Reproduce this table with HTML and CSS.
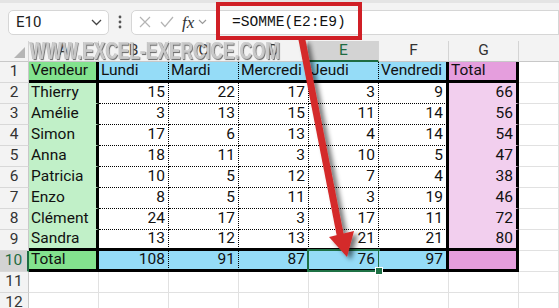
FILE: index.html
```html
<!DOCTYPE html>
<html lang="fr">
<head>
<meta charset="utf-8">
<link rel="stylesheet" href="styles.css">
</head>
<body>
<div class="app">
  <div class="toolbar">
    <div class="namebox">
      <span>E10</span>
      <svg class="chev" width="11" height="7" viewBox="0 0 11 7"><path d="M1 1 L5.5 5.5 L10 1" fill="none" stroke="#444" stroke-width="1.3"/></svg>
    </div>
    <svg class="dots" width="4" height="14" viewBox="0 0 4 14"><circle cx="2" cy="2" r="1.4" fill="#555"/><circle cx="2" cy="7" r="1.4" fill="#555"/><circle cx="2" cy="12" r="1.4" fill="#555"/></svg>
    <div class="fxbox">
      <svg width="12" height="12" viewBox="0 0 12 12"><path d="M1 1 L11 11 M11 1 L1 11" stroke="#b4b4b4" stroke-width="1.2" fill="none"/></svg>
      <svg width="14" height="12" viewBox="0 0 14 12"><path d="M1 6 L5 10.5 L13 1" stroke="#b4b4b4" stroke-width="1.2" fill="none"/></svg>
      <span class="fx">fx</span>
      <svg width="9" height="6" viewBox="0 0 9 6"><path d="M1 1 L4.5 4.5 L8 1" fill="none" stroke="#9a9a9a" stroke-width="1.2"/></svg>
    </div>
    <div class="formula">=SOMME(E2:E9)</div>
    <div class="redbox"></div>
  </div>

  <div class="sheet">
    <div class="corner"></div>
    <div class="ch">A</div><div class="ch">B</div><div class="ch">C</div><div class="ch">D</div><div class="ch sel">E</div><div class="ch">F</div><div class="ch">G</div><div class="ch last"></div>

    <div class="rh">1</div>
    <div class="c a dk r1">Vendeur</div>
    <div class="c bl r1 dot">Lundi</div>
    <div class="c bl r1 dot">Mardi</div>
    <div class="c bl r1 dot">Mercredi</div>
    <div class="c bl r1 dot">Jeudi</div>
    <div class="c bl r1 thr">Vendredi</div>
    <div class="c g gk r1">Total</div>
    <div class="c e"></div>

    <div class="rh">2</div>
    <div class="c a">Thierry</div>
    <div class="c n dot dr">15</div><div class="c n dot dr">22</div><div class="c n dot dr">17</div><div class="c n dot dr">3</div><div class="c n thr dr">9</div>
    <div class="c n g">66</div><div class="c e"></div>

    <div class="rh">3</div>
    <div class="c a">Amélie</div>
    <div class="c n dot dr">3</div><div class="c n dot dr">13</div><div class="c n dot dr">15</div><div class="c n dot dr">11</div><div class="c n thr dr">14</div>
    <div class="c n g">56</div><div class="c e"></div>

    <div class="rh">4</div>
    <div class="c a">Simon</div>
    <div class="c n dot dr">17</div><div class="c n dot dr">6</div><div class="c n dot dr">13</div><div class="c n dot dr">4</div><div class="c n thr dr">14</div>
    <div class="c n g">54</div><div class="c e"></div>

    <div class="rh">5</div>
    <div class="c a">Anna</div>
    <div class="c n dot dr">18</div><div class="c n dot dr">11</div><div class="c n dot dr">3</div><div class="c n dot dr">10</div><div class="c n thr dr">5</div>
    <div class="c n g">47</div><div class="c e"></div>

    <div class="rh">6</div>
    <div class="c a">Patricia</div>
    <div class="c n dot dr">10</div><div class="c n dot dr">5</div><div class="c n dot dr">12</div><div class="c n dot dr">7</div><div class="c n thr dr">4</div>
    <div class="c n g">38</div><div class="c e"></div>

    <div class="rh">7</div>
    <div class="c a">Enzo</div>
    <div class="c n dot dr">8</div><div class="c n dot dr">5</div><div class="c n dot dr">11</div><div class="c n dot dr">3</div><div class="c n thr dr">19</div>
    <div class="c n g">46</div><div class="c e"></div>

    <div class="rh">8</div>
    <div class="c a">Clément</div>
    <div class="c n dot dr">24</div><div class="c n dot dr">17</div><div class="c n dot dr">3</div><div class="c n dot dr">17</div><div class="c n thr dr">11</div>
    <div class="c n g">72</div><div class="c e"></div>

    <div class="rh">9</div>
    <div class="c a r9">Sandra</div>
    <div class="c n dot r9">13</div><div class="c n dot r9">12</div><div class="c n dot r9">13</div><div class="c n dot r9">21</div><div class="c n thr r9">21</div>
    <div class="c n g r9">80</div><div class="c e"></div>

    <div class="rh rsel">10</div>
    <div class="c a dk r10">Total</div>
    <div class="c n bl dot r10">108</div><div class="c n bl dot r10">91</div><div class="c n bl dot r10">87</div><div class="c n bl dot r10 active">76</div><div class="c n bl thr r10">97</div>
    <div class="c g gk r10"></div><div class="c e"></div>

    <div class="rh">11</div>
    <div class="c e"></div><div class="c e"></div><div class="c e"></div><div class="c e"></div><div class="c e"></div><div class="c e"></div><div class="c e"></div><div class="c e"></div>

    <div class="rh">12</div>
    <div class="c e"></div><div class="c e"></div><div class="c e"></div><div class="c e"></div><div class="c e"></div><div class="c e"></div><div class="c e"></div><div class="c e"></div>
  </div>

  <div class="watermark">WWW.EXCEL-EXERCICE.COM</div>

  <svg class="arrow" width="559" height="308" viewBox="0 0 559 308">
    <defs>
      <filter id="sh" x="-50%" y="-10%" width="200%" height="130%">
        <feGaussianBlur in="SourceAlpha" stdDeviation="2.5"/>
        <feOffset dx="4" dy="3" result="b"/>
        <feComponentTransfer><feFuncA type="linear" slope="0.55"/></feComponentTransfer>
        <feMerge><feMergeNode/><feMergeNode in="SourceGraphic"/></feMerge>
      </filter>
    </defs>
    <g filter="url(#sh)" fill="#d42a2a">
      <polygon points="298.5,40 305.5,40 344,236 337,237"/>
      <polygon points="329,237 354,231 347,257"/>
    </g>
  </svg>
</div>
</body>
</html>
```

FILE: styles.css
```css
* { box-sizing: border-box; }
html, body { margin: 0; padding: 0; }
body {
  width: 559px;
  height: 308px;
  overflow: hidden;
  background: #ffffff;
  font-family: Roboto, "Noto Sans", sans-serif;
  color: #111;
}
.app { position: relative; width: 559px; height: 308px; overflow: hidden; }

.toolbar {
  position: relative;
  height: 41px;
  background: #f3f3f3;
  border-top: 3px solid #e4e4e4;
  display: flex;
  align-items: center;
  padding-left: 8px;
}
.namebox {
  width: 101px;
  height: 25px;
  background: #fff;
  border: 1px solid #d6d6d6;
  border-radius: 5px;
  display: flex;
  align-items: center;
  justify-content: space-between;
  padding: 0 6px 0 7px;
  font-size: 15px;
  color: #222;
}
.dots { margin: 0 9px 0 9px; }
.fxbox {
  width: 88px;
  height: 25px;
  background: #fff;
  border: 1px solid #d6d6d6;
  border-radius: 5px 0 0 5px;
  display: flex;
  align-items: center;
  padding-left: 7px;
  gap: 9px;
}
.fx {
  font-family: "Liberation Serif", "DejaVu Serif", serif;
  font-style: italic;
  font-size: 17px;
  color: #333;
  margin-left: -1px;
  margin-right: -5px;
  line-height: 1;
}
.formula {
  flex: 1;
  height: 25px;
  background: #fff;
  border: 1px solid #d6d6d6;
  border-left: none;
  display: flex;
  align-items: center;
  padding-left: 13px;
  font-family: "Liberation Mono", "DejaVu Sans Mono", monospace;
  font-size: 14.6px;
  color: #111;
}
.redbox {
  position: absolute;
  left: 216px;
  top: -1px;
  width: 146px;
  height: 38px;
  border: 4px solid #d01f26;
}

.sheet {
  display: grid;
  grid-template-columns: 29px repeat(7, 70px) 1fr;
  grid-auto-rows: 21px;
  font-size: 15.5px;
}
.corner {
  background: #f3f3f3;
  border-right: 1px solid #d4d4d4;
  border-bottom: 1px solid #c8c8c8;
  position: relative;
}
.corner::after {
  content: "";
  position: absolute;
  right: 3px;
  bottom: 3px;
  border-left: 11px solid transparent;
  border-bottom: 11px solid #b5b5b5;
}
.ch {
  background: #f3f3f3;
  border-right: 1px solid #d4d4d4;
  border-bottom: 1px solid #c8c8c8;
  display: flex;
  align-items: center;
  justify-content: center;
  color: #333;
  line-height: 1;
}
.ch.sel {
  background: #d3d3d3;
  color: #1e6b41;
  border-bottom: 2px solid #1e6b41;
}
.ch.last { border-right: none; }
.rh {
  background: #f3f3f3;
  border-right: 1px solid #c8c8c8;
  border-bottom: 1px solid #d8d8d8;
  display: flex;
  align-items: center;
  justify-content: center;
  color: #333;
  line-height: 1;
}
.rh.rsel {
  background: #d3d3d3;
  color: #1e6b41;
  border-right: 2px solid #1e6b41;
}

.c {
  position: relative;
  border-right: 1px solid #e1e1e1;
  border-bottom: 1px solid #e1e1e1;
  display: flex;
  align-items: center;
  padding: 0 2px 0 2px;
  white-space: nowrap;
  overflow: visible;
  line-height: 1;
}
.c.n { justify-content: flex-end; padding-right: 3px; }

.c.a {
  background: #c1f0c8;
  border-right: 3px solid #000;
  border-bottom-color: transparent;
}
.c.a.dk { background: #83e28e; }
.c.bl { background: #95dcf7; }
.c.g {
  background: #f2cfee;
  border-right: 3px solid #000;
  border-bottom-color: transparent;
}
.c.g.gk { background: #e59edd; }

.c.dot { border-right: 1px dotted #000; }
.c.thr { border-right: 3px solid #000; }
.c.dr { border-bottom: 1px dotted #000; }

.c.r1 { border-bottom: 3px solid #000; }
.c.r9 { border-bottom: 3px solid #000; }
.c.r10 { border-bottom: 3px solid #000; }

.c.e { background: #fff; }

.c.active::after {
  content: "";
  position: absolute;
  left: -2px;
  top: -2px;
  right: -2px;
  bottom: -3px;
  border: 2px solid #1f7145;
}
.c.active::before {
  content: "";
  position: absolute;
  right: -5px;
  bottom: -6px;
  width: 6px;
  height: 6px;
  background: #1f7145;
  border: 1px solid #fff;
  z-index: 2;
}

.watermark {
  position: absolute;
  left: 30px;
  top: 37px;
  font-family: "Liberation Sans", Arial, sans-serif;
  font-weight: bold;
  font-size: 24px;
  letter-spacing: 0.5px;
  color: rgba(212, 212, 212, 0.88);
  text-shadow: 1px 1px 1px rgba(80, 80, 80, 0.85), -1px 0 0 rgba(150, 150, 150, 0.5);
  transform: scaleX(0.7);
  transform-origin: left top;
  white-space: nowrap;
  pointer-events: none;
}
.arrow {
  position: absolute;
  left: 0;
  top: 0;
  pointer-events: none;
}
```
